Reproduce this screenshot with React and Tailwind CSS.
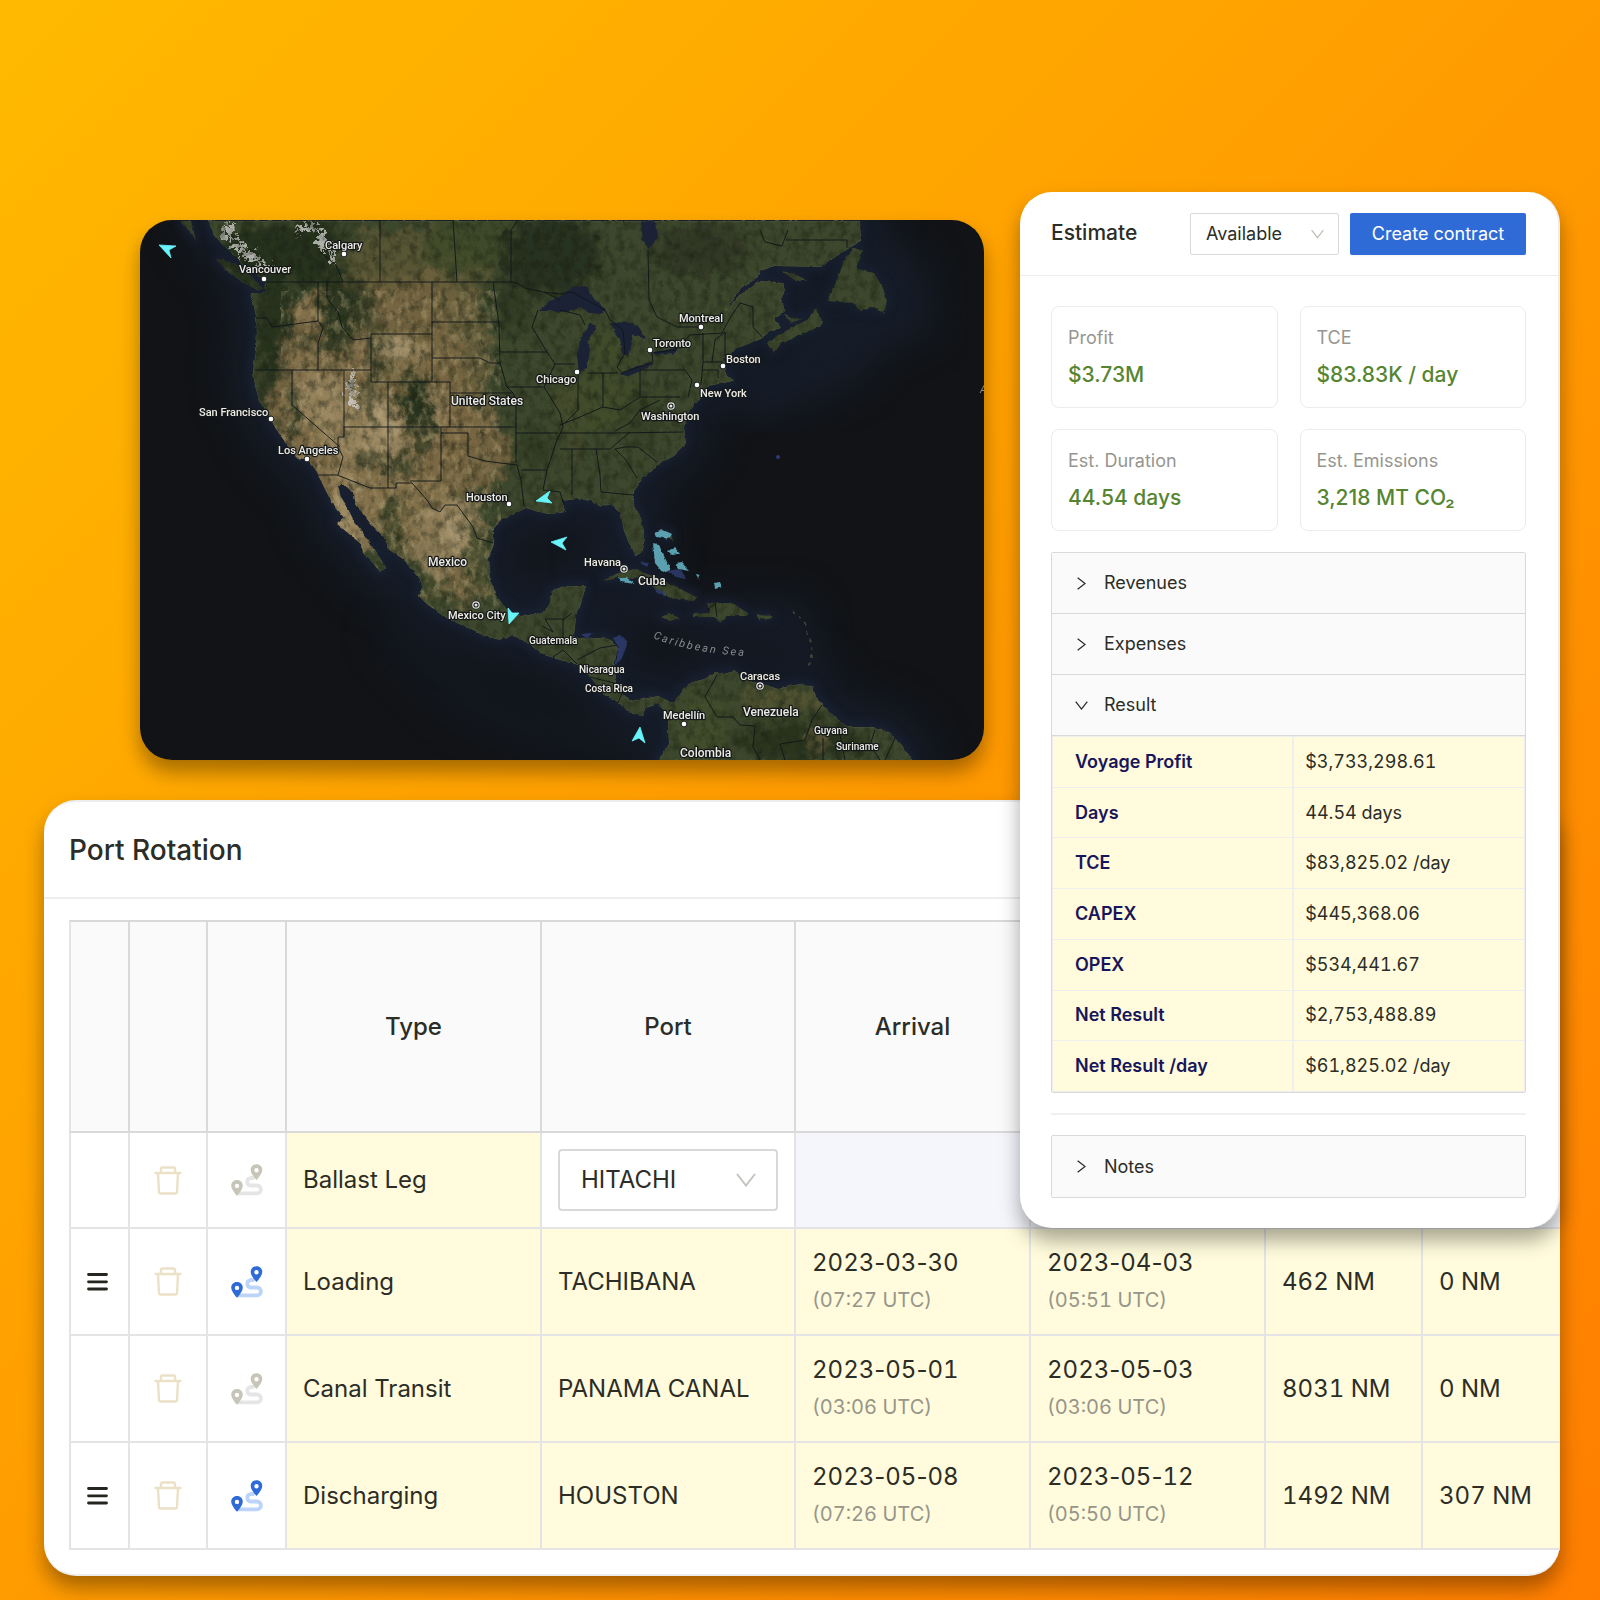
import { useState } from "react";
import clsx from "clsx";

const stats = [
  { label: "Profit", value: "$3.73M" },
  { label: "TCE", value: "$83.83K / day" },
  { label: "Est. Duration", value: "44.54 days" },
  { label: "Est. Emissions", value: "3,218 MT CO₂" },
];

const results = [
  { label: "Voyage Profit", value: "$3,733,298.61" },
  { label: "Days", value: "44.54 days" },
  { label: "TCE", value: "$83,825.02 /day" },
  { label: "CAPEX", value: "$445,368.06" },
  { label: "OPEX", value: "$534,441.67" },
  { label: "Net Result", value: "$2,753,488.89" },
  { label: "Net Result /day", value: "$61,825.02 /day" },
];

const legs = [
  {
    type: "Loading",
    port: "TACHIBANA",
    arrival: ["2023-03-30", "(07:27 UTC)"],
    departure: ["2023-04-03", "(05:51 UTC)"],
    distance: "462 NM",
    seca: "0 NM",
    active: true,
  },
  {
    type: "Canal Transit",
    port: "PANAMA CANAL",
    arrival: ["2023-05-01", "(03:06 UTC)"],
    departure: ["2023-05-03", "(03:06 UTC)"],
    distance: "8031 NM",
    seca: "0 NM",
    active: false,
  },
  {
    type: "Discharging",
    port: "HOUSTON",
    arrival: ["2023-05-08", "(07:26 UTC)"],
    departure: ["2023-05-12", "(05:50 UTC)"],
    distance: "1492 NM",
    seca: "307 NM",
    active: true,
  },
];

const mainland =
  "M67 0L72 12L80 22L92 33L103 45L115 52L124 60L125 70L121 73L110 72L115 95L116 110L115 130L112 150L114 165L118 180L128 195L135 208L142 218L150 230L158 238L168 240L174 248L180 260L190 280L203 297L196 303L207 312L220 323L222 332L230 340L240 352L245 347L240 338L232 327L223 313L213 300L207 288L200 277L197 265L205 265L212 272L215 283L222 293L230 303L245 318L247 328L262 338L277 355L282 367L278 375L290 387L307 398L327 407L343 415L360 419L373 415L387 422L400 433L413 437L430 442L437 444L450 457L463 473L478 483L492 493L502 495L505 487L517 483L527 492L527 507L528 523L517 540L772 540L760 523L748 512L732 506L707 506L695 497L683 485L675 477L672 465L653 464L637 468L623 463L607 460L593 450L583 453L575 452L563 458L550 462L540 472L533 483L528 480L517 475L502 478L490 480L482 473L475 463L474 440L477 427L470 418L457 417L440 418L433 415L435 397L440 383L445 365L427 365L412 370L408 385L402 392L380 395L367 390L357 377L350 360L348 337L353 323L353 310L360 300L373 293L385 287L395 290L407 293L420 292L425 289L420 280L437 278L450 280L460 286L470 283L480 292L482 307L488 323L495 335L502 330L504 317L500 297L493 283L493 270L503 257L520 242L533 235L545 223L543 207L548 190L560 177L567 165L593 160L585 153L583 137L597 127L620 118L627 112L640 107L634 98L644 90L640 78L644 70L642 62L620 60L600 73L585 90L600 68L617 57L620 50L633 45L680 46L693 37L707 28L720 20L719 0Z";

const islands =
  "M76 38L95 43L110 55L122 68L118 70L100 60L85 49ZM40 0L48 10L55 20L52 8L50 0ZM627 122L633 132L640 123L680 105L682 101L675 88L668 98L650 107ZM642 93L650 97L661 98L650 102ZM713 27L722 30L715 48L733 52L742 67L746 80L743 93L733 86L720 90L713 82L687 80L695 62L703 40ZM641 50L654 53L666 60L655 60ZM462 360L477 352L493 348L517 357L533 365L556 376L553 380L527 377L520 370L498 358L478 357ZM567 382L590 382L607 392L607 395L587 395L580 402L574 396L553 396L553 393L570 392ZM520 396L529 393L539 397L529 400ZM617 394L632 395L629 399L617 398ZM520 311L530 312L532 320L524 316Z";

const lakes =
  "M398 90L410 80L420 75L432 66L446 65L453 78L465 88L462 93L448 92L440 86L430 90L420 92L412 90ZM450 103L442 113L436 133L438 153L446 147L449 130L447 120L457 105ZM470 102L485 101L497 105L505 118L492 114L488 137L482 133L479 118L475 113ZM478 153L497 145L515 142L503 149L487 155ZM513 131L525 129L537 127L535 133L516 134ZM500 0L515 0L517 17L508 28L502 20ZM206 277";

const borders =
  "M125 62H371M240 0V62M313 0L317 62M371 62V10L378 0M203 62L196 45L180 32M116 98H127L132 107L178 101V62M187 62V78L198 92L202 107L213 120L231 118M178 101L183 108L178 123V150M115 150H231M231 114V162H310V207M231 114H292M292 62V162M292 102H359M292 138H340L350 143L360 143M353 62L359 105L360 143L367 167L373 173M360 132H407M367 167H403M310 173H373L376 180V243M152 150V185L200 227M204 150V217H198V227L203 237L198 255M204 207H376M248 162V268M301 207V261H270M301 213H328V236L345 241L360 243L377 245L381 260L384 286M177 255H197L230 268H256V263H272L287 280L292 288L300 292L305 285H317L333 307L337 318L353 323M376 213H418M381 250H407M398 90L392 107L407 132L415 144L404 167L420 193L423 207L417 220L407 250L403 270L420 272L424 285M371 62L377 63L385 68L403 72L420 74L432 72L465 90L470 100L483 110L485 133L477 147L482 153L513 142L512 133L535 130L550 115L582 113L590 98L600 83L613 87V107L622 117M508 30L509 80L517 97L537 107L560 107M415 144H435M438 153V190L425 203M447 153H478M463 153V187M420 205L440 197L463 187L480 190L500 177V150L507 150H545L552 160L548 177M500 177H540M420 213H475L543 212M420 229H470L490 212M475 211L490 203L500 190L520 180M432 229V275M456 229L460 255L461 272L493 275M475 229L486 240L497 258M475 229L485 227H498L517 242M563 113V142L561 165M572 142L575 120L585 112V137M563 142H583M563 150H578V158M404 72L420 80M420 90L440 95L445 105M577 455L565 477L577 497H593L600 505L615 506L613 527L620 540M567 390L577 382M575 382L577 397M402 406L413 412L405 399H423V425M423 400L432 393M413 437L423 430L437 444M437 440L460 428L477 425M450 457L474 463M478 483L482 473M682 485L672 500L665 520L640 524L645 540M683 518V540M735 510L730 525L740 540M755 518L745 540M700 515L705 540M620 10L625 22L642 26L648 10M646 20H707V28";

const labels = [
  ["Calgary", 185, 29, 11],
  ["Vancouver", 99, 53, 11],
  ["San Francisco", 59, 196, 11],
  ["Los Angeles", 138, 234, 11],
  ["United States", 311, 185, 12],
  ["Chicago", 396, 163, 11],
  ["Montreal", 539, 102, 11],
  ["Toronto", 513, 127, 11],
  ["Boston", 586, 143, 11],
  ["New York", 560, 177, 11],
  ["Washington", 501, 200, 11],
  ["Houston", 326, 281, 11],
  ["Mexico", 288, 346, 12],
  ["Mexico City", 308, 399, 11],
  ["Guatemala", 389, 424, 10],
  ["Havana", 444, 346, 11],
  ["Cuba", 498, 365, 12],
  ["Nicaragua", 439, 453, 10],
  ["Costa Rica", 445, 472, 10],
  ["Caracas", 600, 460, 11],
  ["Venezuela", 603, 496, 12],
  ["Medellín", 523, 499, 11],
  ["Colombia", 540, 537, 12],
  ["Guyana", 674, 514, 10],
  ["Suriname", 696, 530, 10],
];

const cities = [
  [204, 34],
  [124, 59],
  [131, 199],
  [167, 239],
  [437, 152],
  [510, 130],
  [561, 107],
  [583, 146],
  [557, 165],
  [369, 284],
  [544, 504],
];

const capitals = [
  [531, 186],
  [336, 385],
  [484, 349],
  [620, 466],
];

const vessels = [
  "M19 25L36 26L29 30L31 38Z",
  "M396 281L410 271L407 278L412 283Z",
  "M411 322L427 317L422 323L426 330Z",
  "M369 404L368 388L372 393L379 393Z",
  "M500 507L492 521L499 518L505 523Z",
];

// [cx, cy, rx, ry, fill, opacity]
const terrain = [
  [225, 170, 105, 115, "#7f6b47", 0.95],
  [270, 60, 75, 55, "#615b38", 0.75],
  [262, 85, 40, 20, "#7b6845", 0.7],
  [290, 150, 60, 100, "#736440", 0.7],
  [320, 230, 50, 45, "#7c6843", 0.85],
  [250, 290, 65, 45, "#85724c", 0.95],
  [310, 320, 35, 48, "#8e7c57", 0.9],
  [313, 312, 12, 18, "#ae9d78", 0.7],
  [325, 365, 22, 22, "#71623d", 0.7],
  [170, 90, 14, 16, "#84714b", 0.9],
  [165, 140, 20, 10, "#84714b", 0.8],
  [205, 300, 12, 50, "#a4916a", 0.8],
  [215, 205, 40, 40, "#99865f", 0.7],
  [240, 222, 26, 18, "#a08d67", 0.8],
  [175, 178, 26, 28, "#9c8963", 0.7],
  [256, 128, 18, 12, "#a99873", 0.8],
  [245, 195, 12, 20, "#ad9b76", 0.7],
  [290, 190, 16, 24, "#94815b", 0.7],
  [143, 188, 5, 22, "#8b7850", 0.7],
  [200, 85, 20, 34, "#2d3721", 1],
  [222, 90, 12, 24, "#333c25", 0.7],
  [192, 122, 15, 17, "#2f3922", 0.9],
  [165, 120, 14, 9, "#353c26", 0.7],
  [130, 110, 13, 60, "#28331f", 1],
  [140, 95, 8, 30, "#2a3520", 0.9],
  [120, 175, 8, 20, "#2a3420", 0.9],
  [152, 195, 6, 28, "#2f3923", 1],
  [276, 185, 15, 30, "#29341f", 1],
  [236, 135, 7, 30, "#303a24", 0.8],
  [228, 180, 6, 24, "#353d27", 0.7],
  [255, 245, 22, 9, "#343c26", 0.8],
  [228, 238, 12, 7, "#343c26", 0.7],
  [282, 220, 8, 14, "#333c26", 0.8],
  [252, 308, 11, 32, "#364026", 0.8],
  [335, 335, 10, 30, "#3d472a", 0.8],
  [290, 375, 16, 12, "#454a2b", 0.8],
  [130, 35, 60, 30, "#26311e", 1],
  [170, 20, 28, 30, "#26311e", 0.9],
  [180, 45, 16, 20, "#26311e", 0.9],
  [330, 25, 50, 30, "#3f4b2a", 0.8],
  [410, 35, 50, 40, "#262f20", 0.9],
  [370, 90, 16, 24, "#2c3622", 0.7],
  [560, 30, 50, 24, "#303524", 0.8],
  [470, 130, 20, 20, "#424e2c", 0.7],
  [455, 180, 45, 30, "#454f2d", 0.7],
  [430, 210, 10, 45, "#4a4d2f", 0.6],
  [395, 225, 16, 16, "#303b23", 0.8],
  [500, 195, 16, 24, "#303b23", 0.6],
  [640, 480, 45, 12, "#5b5935", 0.7],
  [660, 520, 60, 20, "#29341f", 0.9],
  [677, 520, 6, 16, "#7b6845", 0.7],
  [560, 510, 22, 35, "#46512e", 0.7],
];

const snow = [
  [88, 12, 6, 9],
  [98, 26, 8, 6],
  [110, 36, 9, 5],
  [122, 44, 8, 3],
  [165, 8, 10, 5],
  [182, 20, 5, 12],
  [192, 34, 3, 10],
  [211, 160, 4, 9],
  [211, 178, 4, 9],
];

const ChevronDown = ({ className }) => (
  <svg
    viewBox="0 0 20 14"
    fill="none"
    stroke="currentColor"
    strokeWidth="2"
    className={className}
    aria-hidden="true"
  >
    <path d="M1 1L10 12.5L19 1" />
  </svg>
);

const TrashIcon = () => (
  <svg
    viewBox="0 0 28 29"
    fill="none"
    stroke="#ebe1c6"
    strokeWidth="2.4"
    strokeLinejoin="round"
    strokeLinecap="round"
    className="h-[29px] w-7"
  >
    <path d="M1.500 7H26.500M7 7V3Q7 1.5 8.500 1.500H19.500Q21 1.500 21 3V7M4 7.500L5 26Q5.100 27.500 6.500 27.500H21.500Q22.900 27.500 23 26L24 7.500" />
  </svg>
);

const RouteIcon = ({ active }) => (
  <svg viewBox="0 0 32 32" className="size-8">
    <path
      d="M6 29.300H26A3.700 3.700 0 0 0 26 21.500H19.500A3.800 3.800 0 0 1 19.500 14H22"
      fill="none"
      stroke={active ? "#bcd4fa" : "#e5e5e5"}
      strokeWidth="3.8"
      strokeLinecap="round"
    />
    <path
      fillRule="evenodd"
      fill={active ? "#2f6bd6" : "#c6c5b8"}
      d="M25.500 0.300C29 0.300 31.300 2.900 31.300 6C31.300 9 28.500 12.500 25.500 16C22.500 12.500 19.700 9 19.700 6C19.700 2.900 22 0.300 25.500 0.300ZM25.500 4A2.200 2.200 0 1 0 25.500 8.400A2.200 2.200 0 1 0 25.500 4ZM6 16C9.500 16 11.800 18.600 11.800 21.700C11.800 24.700 9 28.200 6 31.700C3 28.200 0.200 24.700 0.200 21.700C0.200 18.600 2.500 16 6 16ZM6 19.700A2.200 2.200 0 1 0 6 24.100A2.200 2.200 0 1 0 6 19.700Z"
    />
  </svg>
);

const DragIcon = () => (
  <svg
    viewBox="0 0 21 18"
    stroke="#24261f"
    strokeWidth="2.8"
    strokeLinecap="round"
    className="h-[18px] w-[21px]"
  >
    <path d="M1.500 1.500H19.500M1.500 8.800H19.500M1.500 16H19.500" />
  </svg>
);

const FleetMap = () => (
  <svg
    viewBox="0 0 844 540"
    preserveAspectRatio="xMidYMid slice"
    className="block h-full w-full"
    role="img"
  >
    <defs>
      <clipPath id="land">
        <path d={mainland} />
        <path d={islands} />
      </clipPath>
      <filter
        id="soft"
        x="-50%"
        y="-50%"
        width="200%"
        height="200%"
        colorInterpolationFilters="sRGB"
      >
        <feGaussianBlur stdDeviation="4" />
      </filter>
      <filter
        id="wide"
        x="-20%"
        y="-20%"
        width="140%"
        height="140%"
        colorInterpolationFilters="sRGB"
      >
        <feGaussianBlur stdDeviation="18" />
      </filter>
      <filter
        id="rough"
        x="-10%"
        y="-10%"
        width="120%"
        height="120%"
        colorInterpolationFilters="sRGB"
      >
        <feTurbulence
          type="fractalNoise"
          baseFrequency="0.07"
          numOctaves="5"
          seed="4"
        />
        <feDisplacementMap
          in="SourceGraphic"
          scale="34"
          xChannelSelector="R"
          yChannelSelector="G"
        />
        <feGaussianBlur stdDeviation="0.6" />
      </filter>
      <filter id="coast" x="-2%" y="-2%" width="104%" height="104%">
        <feTurbulence baseFrequency="0.15" numOctaves="2" seed="8" />
        <feDisplacementMap
          in="SourceGraphic"
          scale="3"
          xChannelSelector="R"
          yChannelSelector="G"
        />
      </filter>
      <filter
        id="speckle"
        x="0"
        y="0"
        width="100%"
        height="100%"
        colorInterpolationFilters="sRGB"
      >
        <feTurbulence
          type="fractalNoise"
          baseFrequency="0.13 0.1"
          numOctaves="6"
          seed="12"
        />
        <feColorMatrix values="0 0 0 0 0.1  0 0 0 0 0.12  0 0 0 0 0.07  2 0 0 0 -0.85" />
      </filter>
      <filter
        id="glint"
        x="0"
        y="0"
        width="100%"
        height="100%"
        colorInterpolationFilters="sRGB"
      >
        <feTurbulence
          type="fractalNoise"
          baseFrequency="0.16 0.09"
          numOctaves="5"
          seed="31"
        />
        <feColorMatrix values="0 0 0 0 0.74  0 0 0 0 0.67  0 0 0 0 0.5  0 2.6 0 0 -1.2" />
      </filter>
      <filter id="snow" x="-60%" y="-60%" width="220%" height="220%">
        <feTurbulence
          type="fractalNoise"
          baseFrequency="0.2"
          numOctaves="3"
          seed="2"
        />
        <feDisplacementMap
          in="SourceGraphic"
          scale="22"
          xChannelSelector="R"
          yChannelSelector="G"
        />
        <feGaussianBlur stdDeviation="0.5" />
      </filter>
      <path id="caribbean" d="M513 418Q560 437 640 437" />
    </defs>

    <rect width="844" height="540" fill="#111316" />
    <g fill="none" stroke="#151c28" strokeLinejoin="round">
      <path d={mainland} strokeWidth="50" filter="url(#wide)" />
      <path
        d="M640 85L720 110L790 80M700 20L760 60L700 140L600 180"
        strokeWidth="60"
        filter="url(#wide)"
      />
      <path
        d="M470 370L560 400L650 400L670 450M450 340L520 330"
        strokeWidth="44"
        filter="url(#wide)"
      />
      <path
        d="M250 400L330 480L440 520L500 520"
        strokeWidth="50"
        opacity="0.5"
        filter="url(#wide)"
      />
      <path d={mainland} strokeWidth="7" stroke="#1a2234" filter="url(#soft)" />
      <path d={islands} strokeWidth="5" stroke="#1a2234" filter="url(#soft)" />
    </g>

    <g filter="url(#coast)">
      <g clipPath="url(#land)">
        <rect width="844" height="540" fill="#3c472d" />
        <g filter="url(#rough)">
          {terrain.map(([cx, cy, rx, ry, fill, opacity], i) => (
            <ellipse
              key={i}
              cx={cx}
              cy={cy}
              rx={rx}
              ry={ry}
              fill={fill}
              opacity={opacity}
              filter="url(#soft)"
            />
          ))}
        </g>
        <g fill="#d0d0cc" opacity="0.8" filter="url(#snow)">
          {snow.map(([cx, cy, rx, ry], i) => (
            <ellipse key={i} cx={cx} cy={cy} rx={rx} ry={ry} />
          ))}
        </g>
        <rect width="844" height="540" filter="url(#speckle)" opacity="0.6" />
        <g opacity="0.45">
          <path
            d="M140 80L250 70L360 90L340 250L350 370L280 390L180 260L150 210Z"
            filter="url(#glint)"
          />
        </g>
        <path d={lakes} fill="#1a2134" />
        <path
          d={mainland}
          fill="none"
          stroke="#8b8460"
          strokeWidth="1"
          opacity="0.3"
        />
      </g>
    </g>

    {/* shallow banks around the Bahamas, Cuba and Honduras */}
    <g filter="url(#coast)">
      <path
        d="M514 312L522 309L531 313L528 318L516 316ZM512 323L518 324L523 335L530 349L522 352L514 342ZM527 330L534 327L539 333L531 334ZM535 343L541 342L549 350L538 348ZM555 353L559 354L557 358ZM573 362L579 361L581 366L574 368ZM478 357L486 357L494 363L480 361Z"
        fill="#5aa0b0"
      />
      <path
        d="M525 350L540 348L545 358L535 356ZM500 341L508 342L506 346ZM472 417L480 414L487 421L481 437L474 446L478 427ZM512 366L520 370L528 376L518 373ZM441 413L452 412L446 418Z"
        fill="#34457e"
        opacity="0.7"
      />
      <path
        d="M652 391L660 397L667 407M666 411L671 424L672 436L667 449"
        fill="none"
        stroke="#3b4638"
        strokeWidth="2"
        strokeDasharray="3 5"
      />
    </g>
    <circle cx="638" cy="237" r="2" fill="#2c3a78" />
    <path d={borders} fill="none" stroke="#0e1518" strokeWidth="0.9" />

    <g
      fill="#ecebe4"
      stroke="#15181a"
      strokeWidth="2.4"
      strokeLinejoin="round"
      paintOrder="stroke"
      className="font-['Roboto',sans-serif] font-medium"
    >
      {labels.map(([name, x, y, size]) => (
        <text key={name} x={x} y={y} fontSize={size}>
          {name}
        </text>
      ))}
    </g>
    <g
      fill="#888b8e"
      fontSize="11"
      fontStyle="italic"
      className="font-['Roboto',sans-serif] tracking-[2px]"
    >
      <text>
        <textPath href="#caribbean">Caribbean Sea</textPath>
      </text>
      <text x="840" y="173">
        A
      </text>
    </g>

    {cities.map(([cx, cy]) => (
      <circle
        key={`${cx}-${cy}`}
        cx={cx}
        cy={cy}
        r="2.9"
        fill="#fff"
        stroke="#15181a"
        strokeWidth="1"
      />
    ))}
    {capitals.map(([cx, cy]) => (
      <g key={`${cx}-${cy}`}>
        <circle cx={cx} cy={cy} r="4.4" fill="#15181a" />
        <circle
          cx={cx}
          cy={cy}
          r="3.2"
          fill="none"
          stroke="#e8e8e4"
          strokeWidth="1.2"
        />
        <circle cx={cx} cy={cy} r="1.5" fill="#e8e8e4" />
      </g>
    ))}
    {vessels.map((d) => (
      <path
        key={d}
        d={d}
        fill="#67f5fb"
        stroke="#67f5fb"
        strokeWidth="0.8"
      />
    ))}
  </svg>
);

const PanelHeader = ({ title, open, onClick }) => (
  <button
    type="button"
    aria-expanded={open}
    onClick={onClick}
    className="flex h-[61px] w-full items-center gap-4 bg-[#fafafa] px-[23px] text-left"
  >
    <ChevronDown className={clsx("h-[9px] w-[13px]", !open && "-rotate-90")} />
    {title}
  </button>
);

const Estimate = () => {
  const [open, setOpen] = useState({ Result: true });
  const toggle = (name) => setOpen({ ...open, [name]: !open[name] });

  return (
    <section className="z-10 col-start-2 row-span-2 row-start-1 self-start overflow-hidden rounded-[32px] border-r-2 border-[#ededed] bg-white pb-[30px] text-lg shadow-[0_12px_20px_rgba(0,0,0,0.35)]">
      <header className="flex h-[84px] items-center border-b border-[#ececec] pr-8 pl-[31px]">
        <h2 className="mr-auto text-[21px] font-medium">Estimate</h2>
        <div className="relative mr-[11px]">
          <select
            aria-label="Status"
            className="h-[42px] w-[149px] appearance-none rounded-xs border border-[#d9d9d9] bg-white px-[15px]"
          >
            <option>Available</option>
          </select>
          <ChevronDown className="pointer-events-none absolute top-4 right-[15px] h-[10px] w-[13px] text-[#bfbfb8]" />
        </div>
        <button
          type="button"
          className="h-[42px] w-44 rounded-xs bg-[#2f6bd6] text-white shadow-xs"
        >
          Create contract
        </button>
      </header>

      <div className="pt-[30px] pr-8 pl-[31px]">
        <dl className="grid grid-cols-2 gap-x-[22px] gap-y-[21px]">
          {stats.map((stat) => (
            <div
              key={stat.label}
              className="h-[102px] rounded-lg border border-[#ececec] px-4 py-3 leading-[37px]"
            >
              <dt className="text-[#96968f]">{stat.label}</dt>
              <dd className="text-[21px] font-medium text-[#568532]">
                {stat.value}
              </dd>
            </div>
          ))}
        </dl>

        <div className="mt-[21px] divide-y divide-[#d9d9d9] rounded-xs border border-[#d9d9d9]">
          <PanelHeader
            title="Revenues"
            open={!!open.Revenues}
            onClick={() => toggle("Revenues")}
          />
          <PanelHeader
            title="Expenses"
            open={!!open.Expenses}
            onClick={() => toggle("Expenses")}
          />
          <PanelHeader
            title="Result"
            open={!!open.Result}
            onClick={() => toggle("Result")}
          />
          {open.Result && (
            <table className="h-[356px] w-full table-fixed border-collapse border border-[#eeeeee]">
              <tbody>
                {results.map((row) => (
                  <tr key={row.label} className="border-b border-[#eeeeee]">
                    <th
                      scope="row"
                      className="w-[51%] border-r-2 border-[#eeeeee] bg-[#fffbdc] pl-[22px] text-left font-semibold text-[#18165a]"
                    >
                      {row.label}
                    </th>
                    <td className="bg-[#fffbdc] pl-[11px] tabular-nums">
                      {row.value}
                    </td>
                  </tr>
                ))}
              </tbody>
            </table>
          )}
        </div>

        <hr className="my-5 border-t-2 border-[#f0f0f0]" />

        <div className="rounded-xs border border-[#d9d9d9]">
          <PanelHeader
            title="Notes"
            open={!!open.Notes}
            onClick={() => toggle("Notes")}
          />
        </div>
      </div>
    </section>
  );
};

const Cell = ({ className, children }) => (
  <td
    className={clsx(
      "border-r-2 border-b-2 border-[#e4e4e6]",
      className || "bg-[#fffbdc] px-4",
    )}
  >
    {children}
  </td>
);

const HeadCell = ({ children }) => (
  <th
    scope="col"
    className="border-t-2 border-r-2 border-b-2 border-[#d9d9d9] bg-[#fafafa] font-medium first:border-l-2 first:border-l-[#e4e4e6]"
  >
    {children}
  </th>
);

const RowTools = ({ active }) => (
  <>
    <Cell className="border-l-2 bg-white pl-4">
      {active && (
        <button type="button" aria-label="Reorder" className="block">
          <DragIcon />
        </button>
      )}
    </Cell>
    <Cell className="bg-white">
      <button type="button" aria-label="Delete" className="mx-auto block">
        <TrashIcon />
      </button>
    </Cell>
    <Cell className="bg-white">
      <button type="button" aria-label="Route" className="mx-auto block">
        <RouteIcon active={active} />
      </button>
    </Cell>
  </>
);

// tabular digits, but hyphens keep their own width
const DateTime = ({ value: [date, time] }) => (
  <>
    <div className="leading-9 tabular-nums">
      {date.split(/(-)/).map((part, i) =>
        part === "-" ? (
          <span key={i} className="normal-nums">
            -
          </span>
        ) : (
          part
        ),
      )}
    </div>
    <div className="text-xl leading-[38px] text-[#96968a] tabular-nums">
      {time}
    </div>
  </>
);

const PortRotation = () => (
  <section className="col-span-2 col-start-1 row-start-2 overflow-hidden rounded-[32px] border-t-2 border-b-2 border-[#ededed] bg-white pb-6 text-2xl shadow-[0_12px_20px_rgba(0,0,0,0.35)]">
    <h2 className="border-b-2 border-[#eeeeee] px-[25px] pt-7 pb-[27px] text-[28px] leading-10 font-medium">
      Port Rotation
    </h2>
    <div className="overflow-hidden pt-[21px] pl-[25px]">
      <table className="w-[1511px] table-fixed border-separate border-spacing-0 text-left">
        <colgroup>
          <col className="w-[61px]" />
          <col className="w-[78px]" />
          <col className="w-[79px]" />
          <col className="w-[255px]" />
          <col className="w-[254px]" />
          <col className="w-[235px]" />
          <col className="w-[235px]" />
          <col className="w-[157px]" />
          <col className="w-[157px]" />
        </colgroup>
        <thead>
          <tr className="h-[213px] text-center">
            <HeadCell />
            <HeadCell />
            <HeadCell />
            <HeadCell>Type</HeadCell>
            <HeadCell>Port</HeadCell>
            <HeadCell>Arrival</HeadCell>
            <HeadCell />
            <HeadCell />
            <HeadCell />
          </tr>
        </thead>
        <tbody>
          <tr className="h-24">
            <RowTools active={false} />
            <Cell>Ballast Leg</Cell>
            <Cell className="bg-white px-4">
              <div className="relative">
                <select
                  aria-label="Port"
                  className="block h-[62px] w-full appearance-none rounded-sm border-2 border-[#d9d9d9] bg-white px-[21px]"
                >
                  <option>HITACHI</option>
                </select>
                <ChevronDown className="pointer-events-none absolute top-6 right-[22px] h-[14px] w-5 text-[#c4c4bf]" />
              </div>
            </Cell>
            <Cell className="bg-[#f5f6fc]" />
            <Cell className="bg-[#f5f6fc]" />
            <Cell className="bg-[#f5f6fc]" />
            <Cell className="bg-[#f5f6fc]" />
          </tr>
          {legs.map((leg) => (
            <tr key={leg.type} className="h-[107px]">
              <RowTools active={leg.active} />
              <Cell>{leg.type}</Cell>
              <Cell>{leg.port}</Cell>
              <Cell>
                <DateTime value={leg.arrival} />
              </Cell>
              <Cell>
                <DateTime value={leg.departure} />
              </Cell>
              <Cell>
                <span className="tabular-nums">{leg.distance}</span>
              </Cell>
              <Cell>
                <span className="tabular-nums">{leg.seca}</span>
              </Cell>
            </tr>
          ))}
        </tbody>
      </table>
    </div>
  </section>
);

export default function App() {
  return (
    <main className="grid min-h-screen grid-cols-[minmax(0,1fr)_540px] content-start gap-x-9 gap-y-10 bg-linear-135 from-[#ffba00] via-[#ff9c00] to-[#ff7e00] pt-48 pr-10 pb-6 pl-11 font-['Inter',sans-serif] text-[#2b2d26]">
      <div className="mt-7 ml-24 h-[540px] overflow-hidden rounded-[32px] shadow-[0_12px_20px_rgba(0,0,0,0.35)]">
        <FleetMap />
      </div>
      <Estimate />
      <PortRotation />
    </main>
  );
}
